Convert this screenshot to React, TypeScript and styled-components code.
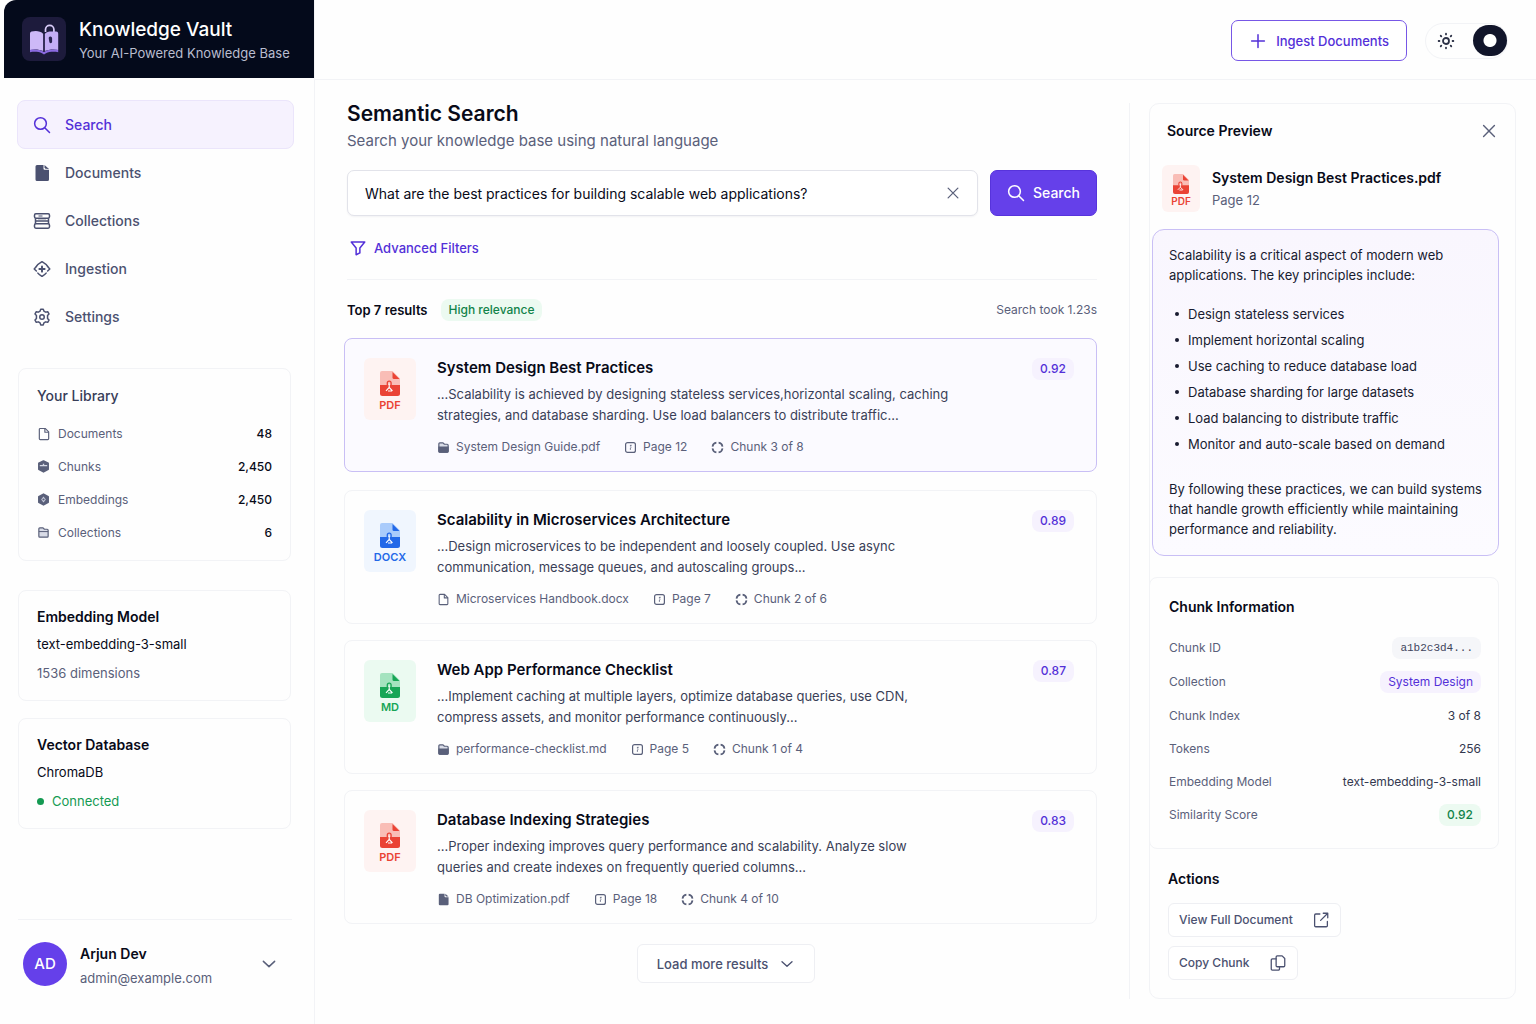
import React, { useState } from 'react';
import styled, { createGlobalStyle, css } from 'styled-components';

const color = {
  ink: '#080a18',
  muted: '#5a607a',
  slate: '#4b5170',
  purple: '#5330d8',
  purpleFill: '#6540ea',
  purpleSoft: '#f6f2fe',
  purpleLine: '#c9bff5',
  green: '#149a52',
  greenSoft: '#ecfaf1',
  line: '#f2f3f6',
  lineStrong: '#e2e3ea',
  page: '#fefefe',
};

const GlobalStyle = createGlobalStyle`
  *, *::before, *::after { box-sizing: border-box; }
  body {
    margin: 0;
    background: ${color.page};
    color: ${color.ink};
    font-family: Inter, "Liberation Sans", sans-serif;
    font-size: 14px;
    line-height: 20px;
  }
  h1, h2, h3, p, ul, dl, dd, dt { margin: 0; padding: 0; }
  ul { list-style: none; }
  button, input { font: inherit; color: inherit; }
  button { cursor: pointer; }
  a { color: inherit; text-decoration: none; }
  svg { display: block; flex: none; }
`;

/* ---------- icons ---------- */

type IconProps = { size?: number; stroke?: number; children?: React.ReactNode };

const Line = ({ size = 16, stroke = 2, children }: IconProps) => (
  <svg
    width={size}
    height={size}
    viewBox="0 0 24 24"
    fill="none"
    stroke="currentColor"
    strokeWidth={stroke}
    strokeLinecap="round"
    strokeLinejoin="round"
    aria-hidden="true"
  >
    {children}
  </svg>
);

const SearchIcon = ({ size = 18 }: IconProps) => (
  <Line size={size}>
    <circle cx="10" cy="10" r="7.8" />
    <path d="M16 16l6 6" />
  </Line>
);

const CloseIcon = ({ size = 20 }: IconProps) => (
  <Line size={size} stroke={1.7}>
    <path d="M5.5 5.5l13 13M18.5 5.5l-13 13" />
  </Line>
);

const ChevronIcon = ({ size = 18 }: IconProps) => (
  <Line size={size}>
    <path d="M4.5 8.500l7.500 7 7.500-7" />
  </Line>
);

const PlusIcon = () => (
  <Line size={18}>
    <path d="M12 3.500v17M3.500 12h17" />
  </Line>
);

const FunnelIcon = () => (
  <Line size={18}>
    <path d="M3 4h18l-6.500 8v6.500l-5 2.500v-9z" />
  </Line>
);

const SunIcon = () => (
  <Line size={18} stroke={2.4}>
    <circle cx="12" cy="12" r="4" />
    <path d="M12 2.200v1M12 20.800v1M2.200 12h1M20.800 12h1M5 5l.7.7M18.300 18.300l.7.700M5 19l.7-.7M18.300 5.700l.7-.7" />
  </Line>
);

const FileSolidIcon = ({ size = 18 }: IconProps) => (
  <svg width={size} height={size} viewBox="0 0 18 18" aria-hidden="true">
    <path
      fill="currentColor"
      d="M4 1h6.500v3.800a1 1 0 0 0 1 1h4.500V15.500a1.500 1.500 0 0 1-1.500 1.500H4a1.500 1.500 0 0 1-1.500-1.500v-13A1.500 1.500 0 0 1 4 1z"
    />
    <path fill="currentColor" d="M11.500 1l4.500 4-3.600-.2-.9-1z" />
  </svg>
);

const FileIcon = ({ size = 14 }: IconProps) => (
  <Line size={size}>
    <path d="M5.500 2.500h8.500l6 6v11.500a1.500 1.500 0 0 1-1.500 1.500h-13A1.500 1.500 0 0 1 4 20V4a1.500 1.500 0 0 1 1.500-1.500z" />
    <path d="M13.500 3v6h6" />
  </Line>
);

const StackIcon = () => (
  <svg width="18" height="18" viewBox="0 0 18 18" fill="none" stroke="currentColor" strokeWidth="1.5" aria-hidden="true">
    <rect x="1.500" y="1.800" width="15" height="4.400" rx="1.400" />
    <path d="M2.500 6.200v5.600M15.500 6.200v5.600M2.500 9h13" />
    <rect x="1.500" y="11.800" width="15" height="4.400" rx="1.400" />
    <path d="M5.500 4h4M5.500 11.500h7M5 6.800h8" strokeWidth="1" />
  </svg>
);

const IngestionIcon = () => (
  <Line size={18} stroke={2}>
    <path d="M4.500 8.500C6 5.500 9 4 12 2.200c3 1.800 6 3.300 7.500 6.300" />
    <path d="M4.500 8.800L1.600 12l2.900 2.600M19.500 8.800L22.400 12l-2.900 2.600" />
    <path d="M6.500 17.500c1.500 1.800 3.500 3 5.500 4.300 2-1.300 4-2.500 5.500-4.300" />
    <path d="M12 8.500v7M8.500 12h7" strokeWidth="2.600" />
  </Line>
);

const GearIcon = () => (
  <Line size={18}>
    <path d="M9.400 4.200L10.300 1.500h3.400l.9 2.700 2.200 1.300 2.800-.6 1.700 3-1.900 2.100v4l1.900 2.100-1.700 3-2.800-.6-2.200 1.300-.9 2.700h-3.400l-.9-2.700-2.200-1.300-2.800.6-1.700-3L4.600 14v-4L2.700 7.900l1.700-3 2.800.6z" />
    <circle cx="12" cy="12" r="3" />
  </Line>
);

const ChunkBallIcon = () => (
  <svg width="13" height="13" viewBox="0 0 14 14" aria-hidden="true">
    <path
      fill="currentColor"
      d="M7 1.200l5 2.400v6.400L7 12.800 2 10V3.600z"
      stroke="currentColor"
      strokeWidth="1.800"
      strokeLinejoin="round"
    />
    <path d="M3 6h8M7 4v2.500" stroke="#d6d9e6" strokeWidth="1.500" />
  </svg>
);

const EmbeddingBallIcon = () => (
  <svg width="13" height="13" viewBox="0 0 14 14" aria-hidden="true">
    <path
      fill="currentColor"
      d="M7 1.200l5 2.800v6L7 12.800 2 10V4z"
      stroke="currentColor"
      strokeWidth="1.800"
      strokeLinejoin="round"
    />
    <path d="M7 3.800L9.500 7 7 10.200 4.500 7z" fill="#c9cddd" />
    <circle cx="7" cy="7" r="1.200" fill="currentColor" />
  </svg>
);

const FolderIcon = ({ solid = false }: { solid?: boolean }) => (
  <svg width="13" height="13" viewBox="0 0 14 14" aria-hidden="true">
    <path
      d="M2 3a1 1 0 0 1 1-1h3.500l1.500 1.500h3a1 1 0 0 1 1 1V11a1 1 0 0 1-1 1H3a1 1 0 0 1-1-1z"
      fill="#d9dce7"
      stroke="currentColor"
      strokeWidth="1.300"
      strokeLinejoin="round"
    />
    <path
      d={solid ? 'M2 6.500h10V11a1 1 0 0 1-1 1H3a1 1 0 0 1-1-1z' : 'M2 6h10'}
      fill={solid ? 'currentColor' : 'none'}
      stroke="currentColor"
      strokeWidth="1.100"
    />
  </svg>
);

const PageIcon = () => (
  <svg width="13" height="13" viewBox="0 0 13 13" fill="none" stroke="currentColor" strokeWidth="1.200" aria-hidden="true">
    <rect x="1.600" y="1.600" width="9.800" height="9.800" rx="2" />
    <path d="M7.600 4.300H6.400v1M6.400 6.200h1M6.400 7.200v1.500" strokeWidth="1" />
  </svg>
);

const ChunkIcon = () => (
  <svg width="13" height="13" viewBox="0 0 13 13" fill="none" stroke="currentColor" strokeWidth="1.700" aria-hidden="true">
    <path d="M1.500 5.700C1.800 3.400 3.200 2 5.400 1.700M7.600 1.700c2.200.3 3.600 1.700 3.900 4M11.500 7.300c-.3 2.300-1.700 3.700-3.900 4M5.400 11.300C3.200 11 1.800 9.600 1.500 7.300" />
  </svg>
);

const ExternalIcon = () => (
  <Line size={18} stroke={1.7}>
    <path d="M10.500 4H5a1.500 1.500 0 0 0-1.500 1.500v14A1.500 1.500 0 0 0 5 21h14a1.500 1.500 0 0 0 1.500-1.500V14M15 3h6v6M21 3L11.500 12.500" />
  </Line>
);

const CopyIcon = () => (
  <Line size={18} stroke={1.7}>
    <path d="M9.500 6.500H4.500A1.500 1.500 0 0 0 3 8v12a1.500 1.500 0 0 0 1.500 1.500h8A1.500 1.500 0 0 0 14 20v-3" />
    <path d="M11 2.500h6.500L21 6v9.500a1.500 1.500 0 0 1-1.500 1.500H11a1.500 1.500 0 0 1-1.500-1.500V4A1.500 1.500 0 0 1 11 2.500z" />
  </Line>
);

const LogoMark = () => (
  <svg width="32" height="34" viewBox="0 0 32 34" aria-hidden="true">
    <path d="M17.500 10V7.500a4.200 4.200 0 0 1 8.400 0V12" fill="none" stroke="#d9ccf8" strokeWidth="1.700" />
    <path d="M2 11.500a2 2 0 0 1 1.500-1.900C8 8.500 12.500 9 15.300 12v17C12 27.500 6 27 2 28z" fill="#cdb9f7" />
    <path d="M16.700 12c1.500-2 4-2.500 7-2.500h4.500a2 2 0 0 1 2 2V28c-4-1-10-.5-13.500 1z" fill="#c4aef5" />
    <path d="M2 28c4-1 10-.5 14 2 4-2.500 10-3 14.200-2v2.200c-4.200-.7-9.200-.5-12.200 1l-2 1.200-2-1.200c-3-1.500-8-1.700-12-1z" fill="#8b6be0" />
    <path d="M16 12v17.500" stroke="#2a2450" strokeWidth="1.300" />
    <path d="M22.300 14.500a1.800 1.800 0 0 1 1.800 1.800v3.500a1.400 1.400 0 0 1-2.800 0l-.6-3.500a1.600 1.600 0 0 1 1.600-1.800z" fill="#2a2450" />
  </svg>
);

const tones = {
  red: { main: '#ea4335', light: '#f9bdb6', soft: '#fef3f2' },
  blue: { main: '#2268e8', light: '#a9cbfb', soft: '#f0f6fe' },
  green: { main: '#17a556', light: '#a4e3bf', soft: '#ebfaf1' },
};
type Tone = keyof typeof tones;

const DocGlyph = ({ tone, width }: { tone: Tone; width: number }) => (
  <svg width={width} height={(width * 5) / 4} viewBox="0 0 20 25" aria-hidden="true">
    <path d="M2 0h10.500L20 7.500V15H0V2a2 2 0 0 1 2-2z" fill={tones[tone].light} />
    <path d="M12.500 1L19.500 8h-5.500a1.500 1.500 0 0 1-1.500-1.500z" fill={tones[tone].main} />
    <path d="M0 14h20v8.500a2.500 2.500 0 0 1-2.500 2.500h-15A2.500 2.500 0 0 1 0 22.500z" fill={tones[tone].main} />
    <path d="M7.300 14v-2a1.900 1.900 0 0 1 3.800 0V14" fill="none" stroke={tones[tone].main} strokeWidth="1.300" />
    <path d="M9.200 12.500v4l-3.200 3.300M9.200 16.500l3.300 3.300M8 20h4" fill="none" stroke="#fff" strokeWidth="1.100" />
  </svg>
);

/* ---------- shell ---------- */

const Shell = styled.div`
  display: grid;
  grid-template-columns: 315px minmax(0, 1fr);
  min-height: 100vh;
`;

const Sidebar = styled.aside`
  display: flex;
  flex-direction: column;
  border-right: 1px solid ${color.line};
`;

const Brand = styled.div`
  display: flex;
  align-items: center;
  gap: 13px;
  height: 78px;
  margin-left: 4px;
  padding-left: 18px;
  border-top-left-radius: 12px;
  background: #040a1b;
`;

const LogoTile = styled.div`
  display: grid;
  place-items: center;
  width: 44px;
  height: 44px;
  border-radius: 8px;
  background: #1d1b3c;
`;

const BrandText = styled.div`
  padding-top: 3px;
`;

const BrandName = styled.div`
  color: #fff;
  font-size: 19px;
  font-weight: 500;
  line-height: 24px;
`;

const BrandTag = styled.div`
  color: #b9bdcf;
  font-size: 13px;
  line-height: 22px;
`;

const Nav = styled.nav`
  display: flex;
  flex-direction: column;
  padding: 22px 20px 0 17px;
`;

const NavLink = styled.a<{ $active?: boolean }>`
  display: flex;
  align-items: center;
  gap: 14px;
  height: ${(p) => (p.$active ? 49 : 48)}px;
  padding-left: 15px;
  border: 1px solid transparent;
  border-radius: 8px;
  color: ${color.slate};
  font-size: 14px;
  font-weight: 500;
  ${(p) =>
    p.$active &&
    css`
      color: ${color.purple};
      background: ${color.purpleSoft};
      border-color: #ebe5fb;
    `}
`;

const IconSlot = styled.span<{ $width?: number }>`
  display: grid;
  place-items: center;
  width: ${(p) => p.$width ?? 18}px;
`;

const SideStack = styled.div`
  display: flex;
  flex-direction: column;
  gap: 17px;
  padding: 27px 23px 0 18px;
`;

const Card = styled.section`
  border: 1px solid ${color.line};
  border-radius: 8px;
  padding: 16px 18px 17px;
`;

const LibraryCard = styled(Card)`
  margin-bottom: 12px;
  padding-top: 17px;
  padding-bottom: 11px;
`;

const SideTitle = styled.h2<{ $soft?: boolean }>`
  color: ${(p) => (p.$soft ? '#383d58' : color.ink)};
  font-size: 14px;
  font-weight: ${(p) => (p.$soft ? 500 : 600)};
  line-height: 20px;
`;

const StatList = styled.dl`
  padding-top: 11px;
`;

const StatRow = styled.div`
  display: flex;
  align-items: center;
  height: 33px;
  font-size: 12px;

  dt {
    display: flex;
    flex: 1;
    align-items: center;
    gap: 9px;
    color: ${color.muted};
  }
  dd {
    font-weight: 500;
  }
`;

const SideText = styled.p`
  padding-top: 7px;
  font-size: 13px;
`;

const SideNote = styled.p<{ $ok?: boolean }>`
  display: flex;
  align-items: center;
  gap: 8px;
  padding-top: 9px;
  color: ${(p) => (p.$ok ? color.green : color.muted)};
  font-size: 13px;
`;

const Dot = styled.span`
  width: 7px;
  height: 7px;
  border-radius: 50%;
  background: ${color.green};
`;

const UserRow = styled.div`
  display: flex;
  align-items: center;
  gap: 13px;
  margin: auto 22px 0 18px;
  padding: 18px 14px 34px 5px;
  border-top: 1px solid ${color.line};
`;

const Avatar = styled.div`
  display: grid;
  place-items: center;
  width: 44px;
  height: 44px;
  border-radius: 50%;
  background: ${color.purpleFill};
  color: #fff;
  font-size: 15px;
  font-weight: 500;
`;

const UserText = styled.div`
  flex: 1;
  padding-top: 4px;
  line-height: 24px;
`;

const UserName = styled.div`
  font-size: 14px;
  font-weight: 600;
`;

const UserMail = styled.div`
  color: ${color.muted};
  font-size: 13px;
`;

const IconButton = styled.button`
  display: grid;
  place-items: center;
  padding: 0;
  border: 0;
  background: none;
  color: ${color.muted};
`;

/* ---------- header ---------- */

const Page = styled.div`
  display: flex;
  flex-direction: column;
  min-width: 0;
`;

const TopBar = styled.header`
  display: flex;
  align-items: center;
  justify-content: flex-end;
  gap: 18px;
  height: 80px;
  padding: 2px 28px 0 0;
  border-bottom: 1px solid ${color.line};
`;

const IngestButton = styled.button`
  display: flex;
  align-items: center;
  gap: 9px;
  height: 41px;
  padding: 0 17px;
  border: 1px solid #7757e6;
  border-radius: 7px;
  background: #fff;
  color: ${color.purple};
  font-size: 13px;
  font-weight: 500;
`;

const ThemeSwitch = styled.label`
  display: flex;
  align-items: center;
  justify-content: space-between;
  width: 83px;
  height: 36px;
  padding-left: 11px;
  border: 1px solid ${color.line};
  border-radius: 18px;
  color: #2d3247;
`;

const ThemeKnob = styled.input`
  appearance: none;
  width: 34px;
  height: 31px;
  margin: 0;
  border-radius: 16px;
  background: radial-gradient(circle, #fff 6px, #11152a 7px);
  cursor: pointer;
`;

/* ---------- main ---------- */

const Columns = styled.div`
  display: grid;
  grid-template-columns: minmax(0, 1fr) 407px;
  align-items: start;
  flex: 1;
`;

const Main = styled.main`
  padding: 20px 32px 20px 29px;
`;

const Intro = styled.div`
  padding-left: 3px;
`;

const PageTitle = styled.h1`
  font-size: 21px;
  font-weight: 600;
  line-height: 28px;
`;

const PageLead = styled.p`
  padding-top: 2px;
  color: ${color.muted};
  font-size: 15px;
  line-height: 22px;
`;

const SearchForm = styled.form`
  display: flex;
  gap: 12px;
  padding-top: 18px;
`;

const SearchField = styled.div`
  display: flex;
  flex: 1;
  align-items: center;
  height: 46px;
  padding: 0 15px 0 17px;
  border: 1px solid ${color.lineStrong};
  border-radius: 7px;
  background: #fff;
  box-shadow: 0 1px 2px rgba(20, 22, 50, 0.05);
`;

const SearchInput = styled.input`
  flex: 1;
  min-width: 0;
  padding: 2px 0 0;
  border: 0;
  outline: 0;
  background: none;
  font-size: 14px;
`;

const SearchButton = styled.button`
  display: flex;
  align-items: center;
  justify-content: center;
  gap: 8px;
  width: 107px;
  height: 46px;
  border: 1px solid #5733dc;
  border-radius: 7px;
  background: ${color.purpleFill};
  color: #fff;
  font-size: 14px;
  font-weight: 500;
`;

const FilterBar = styled.div`
  padding: 21px 0 20px 2px;
  border-bottom: 1px solid ${color.line};
`;

const FilterButton = styled.button`
  display: flex;
  align-items: center;
  gap: 7px;
  padding: 0;
  border: 0;
  background: none;
  color: ${color.purple};
  font-size: 13px;
  font-weight: 500;
  line-height: 22px;
`;

const ResultsBar = styled.div`
  display: flex;
  align-items: center;
  gap: 13px;
  padding: 19px 0 17px;
`;

const ResultsCount = styled.h2`
  font-size: 13px;
  font-weight: 600;
`;

const Timing = styled.span`
  margin-left: auto;
  color: ${color.muted};
  font-size: 12px;
`;

const pillKinds = {
  green: css`
    color: #11834a;
    background: ${color.greenSoft};
  `,
  purple: css`
    color: ${color.purple};
    background: ${color.purpleSoft};
  `,
  code: css`
    color: #3e445c;
    background: #f5f6f9;
    font-family: "Liberation Mono", monospace;
    font-size: 11px;
  `,
};

const Pill = styled.span<{ $kind: keyof typeof pillKinds; $bold?: boolean }>`
  display: block;
  padding: 1px 8px;
  border-radius: 8px;
  font-size: 12px;
  font-weight: ${(p) => (p.$bold ? 500 : 400)};
  ${(p) => pillKinds[p.$kind]}
`;

const Results = styled.ul`
  display: flex;
  flex-direction: column;
  gap: 16px;
`;

const ResultCard = styled.li<{ $selected?: boolean }>`
  display: grid;
  grid-template-columns: 52px minmax(0, 1fr) auto;
  align-items: start;
  column-gap: 21px;
  padding: 19px 22px 15px 19px;
  border: 1px solid ${color.line};
  border-radius: 8px;
  ${(p) =>
    p.$selected &&
    css`
      margin-bottom: 2px;
      border-color: ${color.purpleLine};
      background: #fbfaff;
    `}
`;

const Thumb = styled.div<{ $tone: Tone; $small?: boolean }>`
  display: flex;
  flex-direction: column;
  align-items: center;
  gap: ${(p) => (p.$small ? 0 : 2)}px;
  height: ${(p) => (p.$small ? 47 : 62)}px;
  padding-top: ${(p) => (p.$small ? 9 : 13)}px;
  border-radius: 6px;
  background: ${(p) => tones[p.$tone].soft};
  color: ${(p) => tones[p.$tone].main};
  font-size: ${(p) => (p.$small ? 10 : 11)}px;
  font-weight: 600;
  line-height: 14px;
`;

const ResultTitle = styled.h3`
  font-size: 15px;
  font-weight: 600;
  line-height: 20px;
`;

const Snippet = styled.p`
  max-width: 515px;
  padding-top: 6px;
  color: #3a3f57;
  font-size: 13px;
  line-height: 21px;
`;

const MetaRow = styled.div`
  display: flex;
  gap: 24px;
  padding-top: 12px;
  color: ${color.muted};
  font-size: 12px;
  line-height: 18px;
`;

const Meta = styled.span`
  display: flex;
  align-items: center;
  gap: 6px;
`;

const More = styled.div`
  display: flex;
  justify-content: center;
  padding: 20px 0 0 11px;
`;

const PlainButton = styled.button<{ $large?: boolean }>`
  display: flex;
  align-items: center;
  gap: ${(p) => (p.$large ? 11 : 19)}px;
  height: ${(p) => (p.$large ? 39 : 34)}px;
  padding: 0 ${(p) => (p.$large ? 19 : 10)}px;
  border: 1px solid #eeeff3;
  border-radius: 6px;
  background: #fff;
  color: ${color.slate};
  font-size: ${(p) => (p.$large ? 13 : 12)}px;
  font-weight: 500;
`;

/* ---------- preview ---------- */

const PreviewRail = styled.aside`
  margin-top: 23px;
  padding: 0 20px 0 19px;
  border-left: 1px solid ${color.line};
`;

const Panel = styled.section`
  padding: 16px 16px 18px 0;
  border: 1px solid ${color.line};
  border-radius: 10px;
`;

const PanelHead = styled.div`
  display: flex;
  align-items: center;
  justify-content: space-between;
  padding-left: 17px;
`;

const PanelTitle = styled.h2`
  font-size: 14px;
  font-weight: 600;
  line-height: 22px;
`;

const SourceRow = styled.div`
  display: grid;
  grid-template-columns: 38px minmax(0, 1fr);
  column-gap: 12px;
  padding: 23px 0 17px 12px;
  line-height: 22px;
`;

const SourceText = styled.div`
  padding-top: 2px;
`;

const SourceName = styled.div`
  font-size: 14px;
  font-weight: 600;
`;

const SourcePage = styled.div`
  color: ${color.muted};
  font-size: 13px;
`;

const Quote = styled.div`
  margin-left: 2px;
  padding: 15px 16px 16px;
  border: 1px solid ${color.purpleLine};
  border-radius: 12px;
  background: linear-gradient(#f9f6fe, #fcfbff);
  color: #181b30;
  font-size: 13px;
`;

const Principles = styled.ul`
  padding: 16px 0 22px;

  li {
    display: flex;
    align-items: center;
    gap: 9px;
    height: 26px;
    padding-left: 6px;
  }
  li::before {
    content: '';
    width: 4px;
    height: 4px;
    border-radius: 50%;
    background: currentColor;
  }
`;

const InfoCard = styled(Card)`
  margin: 21px 0 0 -1px;
  padding: 18px 17px 17px 19px;
`;

const InfoList = styled.dl`
  padding-top: 13px;
`;

const InfoRow = styled.div<{ $tall?: boolean }>`
  display: flex;
  align-items: center;
  justify-content: space-between;
  height: ${(p) => (p.$tall ? 34 : 33)}px;
  color: #33384f;
  font-size: 12px;

  dt {
    color: ${color.muted};
  }
`;

const Actions = styled.div`
  display: flex;
  flex-direction: column;
  align-items: flex-start;
  gap: 9px;
  padding: 19px 0 0 18px;
`;

const ActionsTitle = styled(PanelTitle)`
  padding-bottom: 4px;
`;

/* ---------- data ---------- */

const navItems = [
  { label: 'Search', icon: <SearchIcon />, active: true },
  { label: 'Documents', icon: <FileSolidIcon /> },
  { label: 'Collections', icon: <StackIcon /> },
  { label: 'Ingestion', icon: <IngestionIcon /> },
  { label: 'Settings', icon: <GearIcon /> },
];

const stats = [
  { label: 'Documents', value: '48', icon: <FileIcon /> },
  { label: 'Chunks', value: '2,450', icon: <ChunkBallIcon /> },
  { label: 'Embeddings', value: '2,450', icon: <EmbeddingBallIcon /> },
  { label: 'Collections', value: '6', icon: <FolderIcon /> },
];

type Result = {
  title: string;
  kind: string;
  tone: Tone;
  text: string;
  file: string;
  fileIcon: React.ReactNode;
  page: number;
  chunk: string;
  score: string;
};

const results: Result[] = [
  {
    title: 'System Design Best Practices',
    kind: 'PDF',
    tone: 'red',
    text: '...Scalability is achieved by designing stateless services,horizontal scaling, caching strategies, and database sharding. Use load balancers to distribute traffic...',
    file: 'System Design Guide.pdf',
    fileIcon: <FolderIcon solid />,
    page: 12,
    chunk: '3 of 8',
    score: '0.92',
  },
  {
    title: 'Scalability in Microservices Architecture',
    kind: 'DOCX',
    tone: 'blue',
    text: '...Design microservices to be independent and loosely coupled. Use async communication, message queues, and autoscaling groups...',
    file: 'Microservices Handbook.docx',
    fileIcon: <FileIcon size={13} />,
    page: 7,
    chunk: '2 of 6',
    score: '0.89',
  },
  {
    title: 'Web App Performance Checklist',
    kind: 'MD',
    tone: 'green',
    text: '...Implement caching at multiple layers, optimize database queries, use CDN, compress assets, and monitor performance continuously...',
    file: 'performance-checklist.md',
    fileIcon: <FolderIcon solid />,
    page: 5,
    chunk: '1 of 4',
    score: '0.87',
  },
  {
    title: 'Database Indexing Strategies',
    kind: 'PDF',
    tone: 'red',
    text: '...Proper indexing improves query performance and scalability. Analyze slow queries and create indexes on frequently queried columns...',
    file: 'DB Optimization.pdf',
    fileIcon: <FileSolidIcon size={13} />,
    page: 18,
    chunk: '4 of 10',
    score: '0.83',
  },
];

const principles = [
  'Design stateless services',
  'Implement horizontal scaling',
  'Use caching to reduce database load',
  'Database sharding for large datasets',
  'Load balancing to distribute traffic',
  'Monitor and auto-scale based on demand',
];

/* ---------- app ---------- */

export default function App() {
  const [query, setQuery] = useState('What are the best practices for building scalable web applications?');
  const [light, setLight] = useState(true);

  return (
    <>
      <GlobalStyle />
      <Shell>
        <Sidebar>
          <Brand>
            <LogoTile>
              <LogoMark />
            </LogoTile>
            <BrandText>
              <BrandName>Knowledge Vault</BrandName>
              <BrandTag>Your AI-Powered Knowledge Base</BrandTag>
            </BrandText>
          </Brand>

          <Nav aria-label="Primary">
            {navItems.map((item) => (
              <NavLink key={item.label} href="#" $active={item.active} aria-current={item.active ? 'page' : undefined}>
                <IconSlot>{item.icon}</IconSlot>
                {item.label}
              </NavLink>
            ))}
          </Nav>

          <SideStack>
            <LibraryCard>
              <SideTitle $soft>Your Library</SideTitle>
              <StatList>
                {stats.map((s) => (
                  <StatRow key={s.label}>
                    <dt>
                      <IconSlot $width={12}>{s.icon}</IconSlot>
                      {s.label}
                    </dt>
                    <dd>{s.value}</dd>
                  </StatRow>
                ))}
              </StatList>
            </LibraryCard>
            <Card>
              <SideTitle>Embedding Model</SideTitle>
              <SideText>text-embedding-3-small</SideText>
              <SideNote>1536 dimensions</SideNote>
            </Card>
            <Card>
              <SideTitle>Vector Database</SideTitle>
              <SideText>ChromaDB</SideText>
              <SideNote $ok>
                <Dot />
                Connected
              </SideNote>
            </Card>
          </SideStack>

          <UserRow>
            <Avatar>AD</Avatar>
            <UserText>
              <UserName>Arjun Dev</UserName>
              <UserMail>admin@example.com</UserMail>
            </UserText>
            <IconButton aria-label="Account menu">
              <ChevronIcon />
            </IconButton>
          </UserRow>
        </Sidebar>

        <Page>
          <TopBar>
            <IngestButton>
              <PlusIcon />
              Ingest Documents
            </IngestButton>
            <ThemeSwitch>
              <SunIcon />
              <ThemeKnob
                type="checkbox"
                aria-label="Light theme"
                checked={light}
                onChange={(e) => setLight(e.target.checked)}
              />
            </ThemeSwitch>
          </TopBar>

          <Columns>
            <Main>
              <Intro>
                <PageTitle>Semantic Search</PageTitle>
                <PageLead>Search your knowledge base using natural language</PageLead>
                <SearchForm onSubmit={(e) => e.preventDefault()}>
                  <SearchField>
                    <SearchInput aria-label="Search query" value={query} onChange={(e) => setQuery(e.target.value)} />
                    <IconButton type="button" aria-label="Clear query" onClick={() => setQuery('')}>
                      <CloseIcon size={18} />
                    </IconButton>
                  </SearchField>
                  <SearchButton type="submit">
                    <SearchIcon />
                    Search
                  </SearchButton>
                </SearchForm>
                <FilterBar>
                  <FilterButton>
                    <FunnelIcon />
                    Advanced Filters
                  </FilterButton>
                </FilterBar>
                <ResultsBar>
                  <ResultsCount>Top 7 results</ResultsCount>
                  <Pill $kind="green" $bold>
                    High relevance
                  </Pill>
                  <Timing>Search took 1.23s</Timing>
                </ResultsBar>
              </Intro>

              <Results>
                {results.map((r, i) => (
                  <ResultCard key={r.title} $selected={i === 0}>
                    <Thumb $tone={r.tone}>
                      <DocGlyph tone={r.tone} width={20} />
                      {r.kind}
                    </Thumb>
                    <div>
                      <ResultTitle>{r.title}</ResultTitle>
                      <Snippet>{r.text}</Snippet>
                      <MetaRow>
                        <Meta>
                          {r.fileIcon}
                          {r.file}
                        </Meta>
                        <Meta>
                          <PageIcon />
                          Page {r.page}
                        </Meta>
                        <Meta>
                          <ChunkIcon />
                          Chunk {r.chunk}
                        </Meta>
                      </MetaRow>
                    </div>
                    <Pill $kind="purple" $bold>
                      {r.score}
                    </Pill>
                  </ResultCard>
                ))}
              </Results>

              <More>
                <PlainButton $large>
                  Load more results
                  <ChevronIcon size={16} />
                </PlainButton>
              </More>
            </Main>

            <PreviewRail>
              <Panel>
                <PanelHead>
                  <PanelTitle>Source Preview</PanelTitle>
                  <IconButton aria-label="Close preview">
                    <CloseIcon />
                  </IconButton>
                </PanelHead>
                <SourceRow>
                  <Thumb $tone="red" $small>
                    <DocGlyph tone="red" width={16} />
                    PDF
                  </Thumb>
                  <SourceText>
                    <SourceName>System Design Best Practices.pdf</SourceName>
                    <SourcePage>Page 12</SourcePage>
                  </SourceText>
                </SourceRow>
                <Quote>
                  <p>Scalability is a critical aspect of modern web applications. The key principles include:</p>
                  <Principles>
                    {principles.map((p) => (
                      <li key={p}>{p}</li>
                    ))}
                  </Principles>
                  <p>
                    By following these practices, we can build systems that handle growth efficiently while maintaining
                    performance and reliability.
                  </p>
                </Quote>
                <InfoCard>
                  <PanelTitle>Chunk Information</PanelTitle>
                  <InfoList>
                    <InfoRow $tall>
                      <dt>Chunk ID</dt>
                      <dd>
                        <Pill $kind="code">a1b2c3d4...</Pill>
                      </dd>
                    </InfoRow>
                    <InfoRow $tall>
                      <dt>Collection</dt>
                      <dd>
                        <Pill $kind="purple">System Design</Pill>
                      </dd>
                    </InfoRow>
                    <InfoRow>
                      <dt>Chunk Index</dt>
                      <dd>3 of 8</dd>
                    </InfoRow>
                    <InfoRow>
                      <dt>Tokens</dt>
                      <dd>256</dd>
                    </InfoRow>
                    <InfoRow>
                      <dt>Embedding Model</dt>
                      <dd>text-embedding-3-small</dd>
                    </InfoRow>
                    <InfoRow>
                      <dt>Similarity Score</dt>
                      <dd>
                        <Pill $kind="green" $bold>
                          0.92
                        </Pill>
                      </dd>
                    </InfoRow>
                  </InfoList>
                </InfoCard>
                <Actions>
                  <ActionsTitle>Actions</ActionsTitle>
                  <PlainButton>
                    View Full Document
                    <ExternalIcon />
                  </PlainButton>
                  <PlainButton>
                    Copy Chunk
                    <CopyIcon />
                  </PlainButton>
                </Actions>
              </Panel>
            </PreviewRail>
          </Columns>
        </Page>
      </Shell>
    </>
  );
}
